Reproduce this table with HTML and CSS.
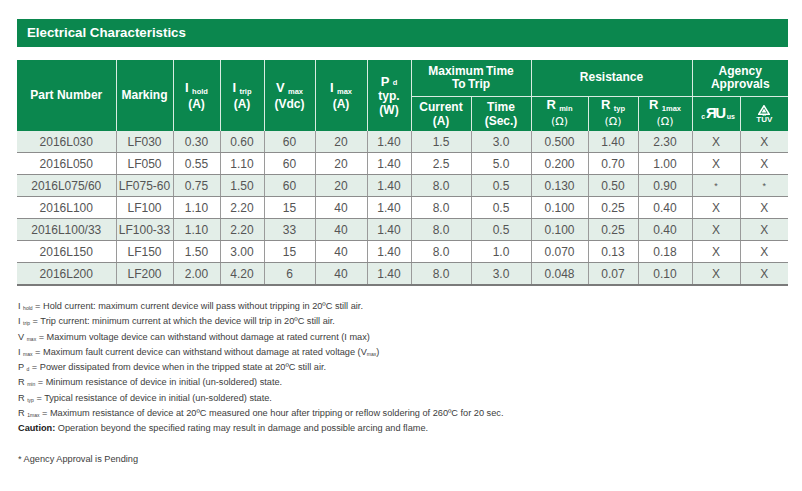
FILE: index.html
```html
<!DOCTYPE html>
<html>
<head>
<meta charset="utf-8">
<link rel="stylesheet" href="styles.css">
</head>
<body>
<div class="page">
  <div class="titlebar">Electrical Characteristics</div>
  <table class="spec">
    <colgroup>
      <col class="w99"><col class="w57"><col class="w47"><col class="w44"><col class="w51"><col class="w52"><col class="w44">
      <col class="w60"><col class="w60"><col class="w57"><col class="w50"><col class="w54"><col class="w48"><col class="w48">
    </colgroup>
    <thead>
      <tr class="hr1">
        <th rowspan="2" class="first">Part Number</th>
        <th rowspan="2">Marking</th>
        <th rowspan="2" class="sym"><span class="big">I</span> <sub>hold</sub><br>(A)</th>
        <th rowspan="2" class="sym"><span class="big">I</span> <sub>trip</sub><br>(A)</th>
        <th rowspan="2" class="sym"><span class="big">V</span> <sub>max</sub><br>(Vdc)</th>
        <th rowspan="2" class="sym"><span class="big">I</span> <sub>max</sub><br>(A)</th>
        <th rowspan="2" class="pd"><span class="big">P</span> <sub class="up">d</sub><br>typ.<br>(W)</th>
        <th colspan="2" class="grp">Maximum&#8201;Time<br>To&#8201;Trip</th>
        <th colspan="3" class="grp">Resistance</th>
        <th colspan="2" class="grp">Agency<br>Approvals</th>
      </tr>
      <tr class="hr2">
        <th>Current<br>(A)</th>
        <th>Time<br>(Sec.)</th>
        <th class="sym"><span class="big">R</span> <sub>min</sub><br><span class="ohm">(Ω)</span></th>
        <th class="sym"><span class="big">R</span> <sub>typ</sub><br><span class="ohm">(Ω)</span></th>
        <th class="sym"><span class="big">R</span> <sub>1max</sub><br><span class="ohm">(Ω)</span></th>
        <th class="logo">
          <span class="ul"><span class="ul-c">c</span><span class="ul-mark">ЯU</span><span class="ul-us">us</span></span>
        </th>
        <th class="logo">
          <span class="tuv">
            <svg width="12" height="10" viewBox="0 0 12 10">
              <polygon points="6,0.8 11.2,9.2 0.8,9.2" fill="none" stroke="#fff" stroke-width="1.6"/>
              <polygon points="6,3.6 8.4,7.6 3.6,7.6" fill="#fff"/>
            </svg>
            <span class="tuv-t">TÜV</span>
          </span>
        </th>
      </tr>
    </thead>
    <tbody>
      <tr class="odd"><td class="first">2016L030</td><td>LF030</td><td>0.30</td><td>0.60</td><td>60</td><td>20</td><td>1.40</td><td>1.5</td><td>3.0</td><td>0.500</td><td>1.40</td><td>2.30</td><td>X</td><td>X</td></tr>
      <tr><td class="first">2016L050</td><td>LF050</td><td>0.55</td><td>1.10</td><td>60</td><td>20</td><td>1.40</td><td>2.5</td><td>5.0</td><td>0.200</td><td>0.70</td><td>1.00</td><td>X</td><td>X</td></tr>
      <tr class="odd"><td class="first">2016L075/60</td><td>LF075-60</td><td>0.75</td><td>1.50</td><td>60</td><td>20</td><td>1.40</td><td>8.0</td><td>0.5</td><td>0.130</td><td>0.50</td><td>0.90</td><td class="star">*</td><td class="star">*</td></tr>
      <tr><td class="first">2016L100</td><td>LF100</td><td>1.10</td><td>2.20</td><td>15</td><td>40</td><td>1.40</td><td>8.0</td><td>0.5</td><td>0.100</td><td>0.25</td><td>0.40</td><td>X</td><td>X</td></tr>
      <tr class="odd"><td class="first">2016L100/33</td><td>LF100-33</td><td>1.10</td><td>2.20</td><td>33</td><td>40</td><td>1.40</td><td>8.0</td><td>0.5</td><td>0.100</td><td>0.25</td><td>0.40</td><td>X</td><td>X</td></tr>
      <tr><td class="first">2016L150</td><td>LF150</td><td>1.50</td><td>3.00</td><td>15</td><td>40</td><td>1.40</td><td>8.0</td><td>1.0</td><td>0.070</td><td>0.13</td><td>0.18</td><td>X</td><td>X</td></tr>
      <tr class="odd last"><td class="first">2016L200</td><td>LF200</td><td>2.00</td><td>4.20</td><td>6</td><td>40</td><td>1.40</td><td>8.0</td><td>3.0</td><td>0.048</td><td>0.07</td><td>0.10</td><td>X</td><td>X</td></tr>
    </tbody>
  </table>

  <div class="notes">
    <p>I <sub>hold</sub> = Hold current: maximum current device will pass without tripping in 20ºC still air.</p>
    <p>I <sub>trip</sub> = Trip current: minimum current at which the device will trip in 20ºC still air.</p>
    <p>V <sub>max</sub> = Maximum voltage device can withstand without damage at rated current (I max)</p>
    <p>I <sub>max</sub> = Maximum fault current device can withstand without damage at rated voltage (V<sub>max</sub>)</p>
    <p>P <sub>d</sub> = Power dissipated from device when in the tripped state at 20ºC still air.</p>
    <p>R <sub>min</sub> = Minimum resistance of device in initial (un-soldered) state.</p>
    <p>R <sub>typ</sub> = Typical resistance of device in initial (un-soldered) state.</p>
    <p>R <sub>1max</sub> = Maximum resistance of device at 20ºC measured one hour after tripping or reflow soldering of 260ºC for 20 sec.</p>
    <p><b>Caution:</b> Operation beyond the specified rating may result in damage and possible arcing and flame.</p>
    <p class="pending">* Agency Approval is Pending</p>
  </div>
</div>
</body>
</html>
```
FILE: styles.css
```css
html, body {
  margin: 0;
  padding: 0;
  background: #ffffff;
}
.page {
  padding: 19px 0 0 17px;
  font-family: "Liberation Sans", Arial, sans-serif;
  width: 771px;
}
.titlebar {
  background: #0b874e;
  color: #ffffff;
  font-weight: bold;
  font-size: 13.3px;
  height: 28px;
  line-height: 28px;
  padding-left: 10px;
  box-sizing: border-box;
}
.spec {
  margin-top: 13px;
  width: 771px;
  table-layout: fixed;
  border-collapse: collapse;
  border-spacing: 0;
}
.w99 { width: 99px; } .w57 { width: 57px; } .w47 { width: 47px; } .w44 { width: 44px; }
.w51 { width: 51px; } .w52 { width: 52px; } .w60 { width: 60px; } .w50 { width: 50px; }
.w54 { width: 54px; } .w48 { width: 48px; }

.spec th {
  background: #0b874e;
  color: #ffffff;
  font-weight: bold;
  font-size: 12px;
  line-height: 13px;
  padding: 0;
  text-align: center;
  vertical-align: middle;
  border-left: 1px solid #d9ece2;
  border-bottom: 1px solid #d9ece2;
}
.spec th.first { border-left: none; }
.spec .hr1 { height: 36px; }
.spec .hr2 { height: 35px; }
.spec thead tr:last-child th,
.spec th[rowspan] { border-bottom: none; }
.spec th.grp { line-height: 13px; }
.spec .hr2 th { line-height: 14px; }
.spec th.sym { line-height: 16px; }
.spec th.pd { line-height: 14px; }
.spec th .big { font-size: 13px; }
.spec th sub {
  font-size: 7.5px;
  vertical-align: -2px;
  line-height: 0;
}
.spec th sub.up { vertical-align: 1px; }
.spec th .ohm { font-weight: normal; font-family: "DejaVu Sans", sans-serif; font-size: 11px; }

.ul {
  display: inline-flex;
  align-items: flex-end;
  gap: 1px;
  color: #fff;
  font-weight: bold;
  line-height: 1;
  padding-left: 4px;
}
.ul-c { font-size: 7px; margin-bottom: 0; }
.ul-mark { font-size: 15px; font-weight: 900; letter-spacing: -1.5px; margin-right: 1px; }
.ul-us { font-size: 7px; margin-bottom: 0; }
.tuv {
  display: inline-flex;
  flex-direction: column;
  align-items: center;
  gap: 1px;
  line-height: 1;
}
.tuv svg { display: block; }
.tuv-t { font-size: 8px; font-weight: bold; }

.spec td {
  height: 21px;
  padding: 0;
  text-align: center;
  vertical-align: middle;
  font-size: 12px;
  color: #555555;
  border-left: 1px solid #9a9a9a;
  border-bottom: 1px solid #8c8c8c;
  white-space: nowrap;
}
.spec td.first { border-left: none; }
.spec tr.odd td { background: #e3eee8; }
.spec tr.last td { border-bottom: 2px solid #7a7a7a; }
.spec td.star { font-size: 9px; }

.notes {
  margin-top: 13px;
  font-size: 9.2px;
  line-height: 15.3px;
  color: #3c3c3c;
  padding-left: 1px;
}
.notes p { margin: 0; }
.notes sub {
  font-size: 5px;
  vertical-align: -1px;
  line-height: 0;
}
.notes b { color: #222; }
.notes .pending { margin-top: 15.3px; }
```
